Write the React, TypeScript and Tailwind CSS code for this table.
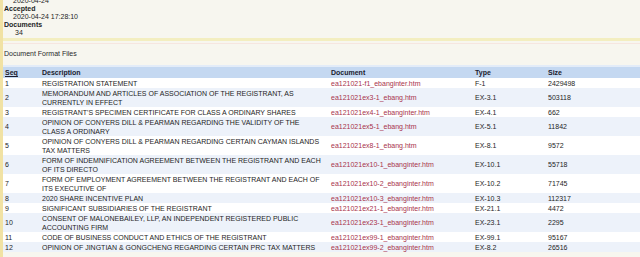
const rows = [
  ["1", "REGISTRATION STATEMENT", "ea121021-f1_ebanginter.htm", "F-1", "2429498"],
  ["2", "MEMORANDUM AND ARTICLES OF ASSOCIATION OF THE REGISTRANT, AS CURRENTLY IN EFFECT", "ea121021ex3-1_ebang.htm", "EX-3.1", "503118"],
  ["3", "REGISTRANT'S SPECIMEN CERTIFICATE FOR CLASS A ORDINARY SHARES", "ea121021ex4-1_ebanginter.htm", "EX-4.1", "662"],
  ["4", "OPINION OF CONYERS DILL & PEARMAN REGARDING THE VALIDITY OF THE CLASS A ORDINARY", "ea121021ex5-1_ebang.htm", "EX-5.1", "11842"],
  ["5", "OPINION OF CONYERS DILL & PEARMAN REGARDING CERTAIN CAYMAN ISLANDS TAX MATTERS", "ea121021ex8-1_ebang.htm", "EX-8.1", "9572"],
  ["6", "FORM OF INDEMNIFICATION AGREEMENT BETWEEN THE REGISTRANT AND EACH OF ITS DIRECTO", "ea121021ex10-1_ebanginter.htm", "EX-10.1", "55718"],
  ["7", "FORM OF EMPLOYMENT AGREEMENT BETWEEN THE REGISTRANT AND EACH OF ITS EXECUTIVE OF", "ea121021ex10-2_ebanginter.htm", "EX-10.2", "71745"],
  ["8", "2020 SHARE INCENTIVE PLAN", "ea121021ex10-3_ebanginter.htm", "EX-10.3", "112317"],
  ["9", "SIGNIFICANT SUBSIDIARIES OF THE REGISTRANT", "ea121021ex21-1_ebanginter.htm", "EX-21.1", "4472"],
  ["10", "CONSENT OF MALONEBAILEY, LLP, AN INDEPENDENT REGISTERED PUBLIC ACCOUNTING FIRM", "ea121021ex23-1_ebanginter.htm", "EX-23.1", "2295"],
  ["11", "CODE OF BUSINESS CONDUCT AND ETHICS OF THE REGISTRANT", "ea121021ex99-1_ebanginter.htm", "EX-99.1", "95167"],
  ["12", "OPINION OF JINGTIAN & GONGCHENG REGARDING CERTAIN PRC TAX MATTERS", "ea121021ex99-2_ebanginter.htm", "EX-8.2", "26516"],
];

export default function App() {
  return (
    <div
      className="w-[640px] h-[257px] overflow-hidden bg-[#f7f6ef] border-l-[3px] border-[#f1e2a4] text-[7px] leading-[8px] text-[#1e1e1e]"
      style={{ fontFamily: '"Liberation Sans", Arial, sans-serif' }}
    >
      {/* filing info */}
      <div className="pl-[1px] -mt-[3px] pb-[1px]">
        <div className="pl-[9px]">2020-04-24</div>
        <div className="font-bold">Accepted</div>
        <div className="pl-[9px]">2020-04-24 17:28:10</div>
        <div className="font-bold">Documents</div>
        <div className="pl-[11px]">34</div>
      </div>
      <div className="h-[3px] bg-[#f3eec0]" />
      <div className="h-[1px] mt-[2px] bg-[#f6e6e0]" />

      <div className="pl-[1px] pt-[6px] pb-[7px] text-[#2a2a2a]">Document Format Files</div>

      <div className="h-[2px] bg-[#e3ecf8]" />
      <table className="w-full border-collapse bg-white">
        <thead>
          <tr className="bg-[#c4d8f1] font-bold text-[#1b1b2e] leading-[9px]">
            <th className="w-[39px] pl-[2px] py-[1px] text-left underline">Seq</th>
            <th className="w-[289px] py-[1px] text-left">Description</th>
            <th className="w-[144px] py-[1px] text-left">Document</th>
            <th className="w-[73px] py-[1px] text-left">Type</th>
            <th className="py-[1px] text-left">Size</th>
          </tr>
        </thead>
        <tbody>
          {rows.map((r, i) => (
            <tr key={r[0]} className={i % 2 === 1 ? "bg-[#edf2fa]" : "bg-white"}>
              <td className="pl-[2px] py-[0.5px] align-middle leading-[9px]">{r[0]}</td>
              <td className="pr-[7px] py-[0.5px] align-middle leading-[9px]">{r[1]}</td>
              <td className="py-[0.5px] align-middle leading-[9px]">
                <a className="text-[#a8324c]">{r[2]}</a>
              </td>
              <td className="py-[0.5px] align-middle leading-[9px]">{r[3]}</td>
              <td className="py-[0.5px] align-middle leading-[9px]">{r[4]}</td>
            </tr>
          ))}
        </tbody>
      </table>
    </div>
  );
}
